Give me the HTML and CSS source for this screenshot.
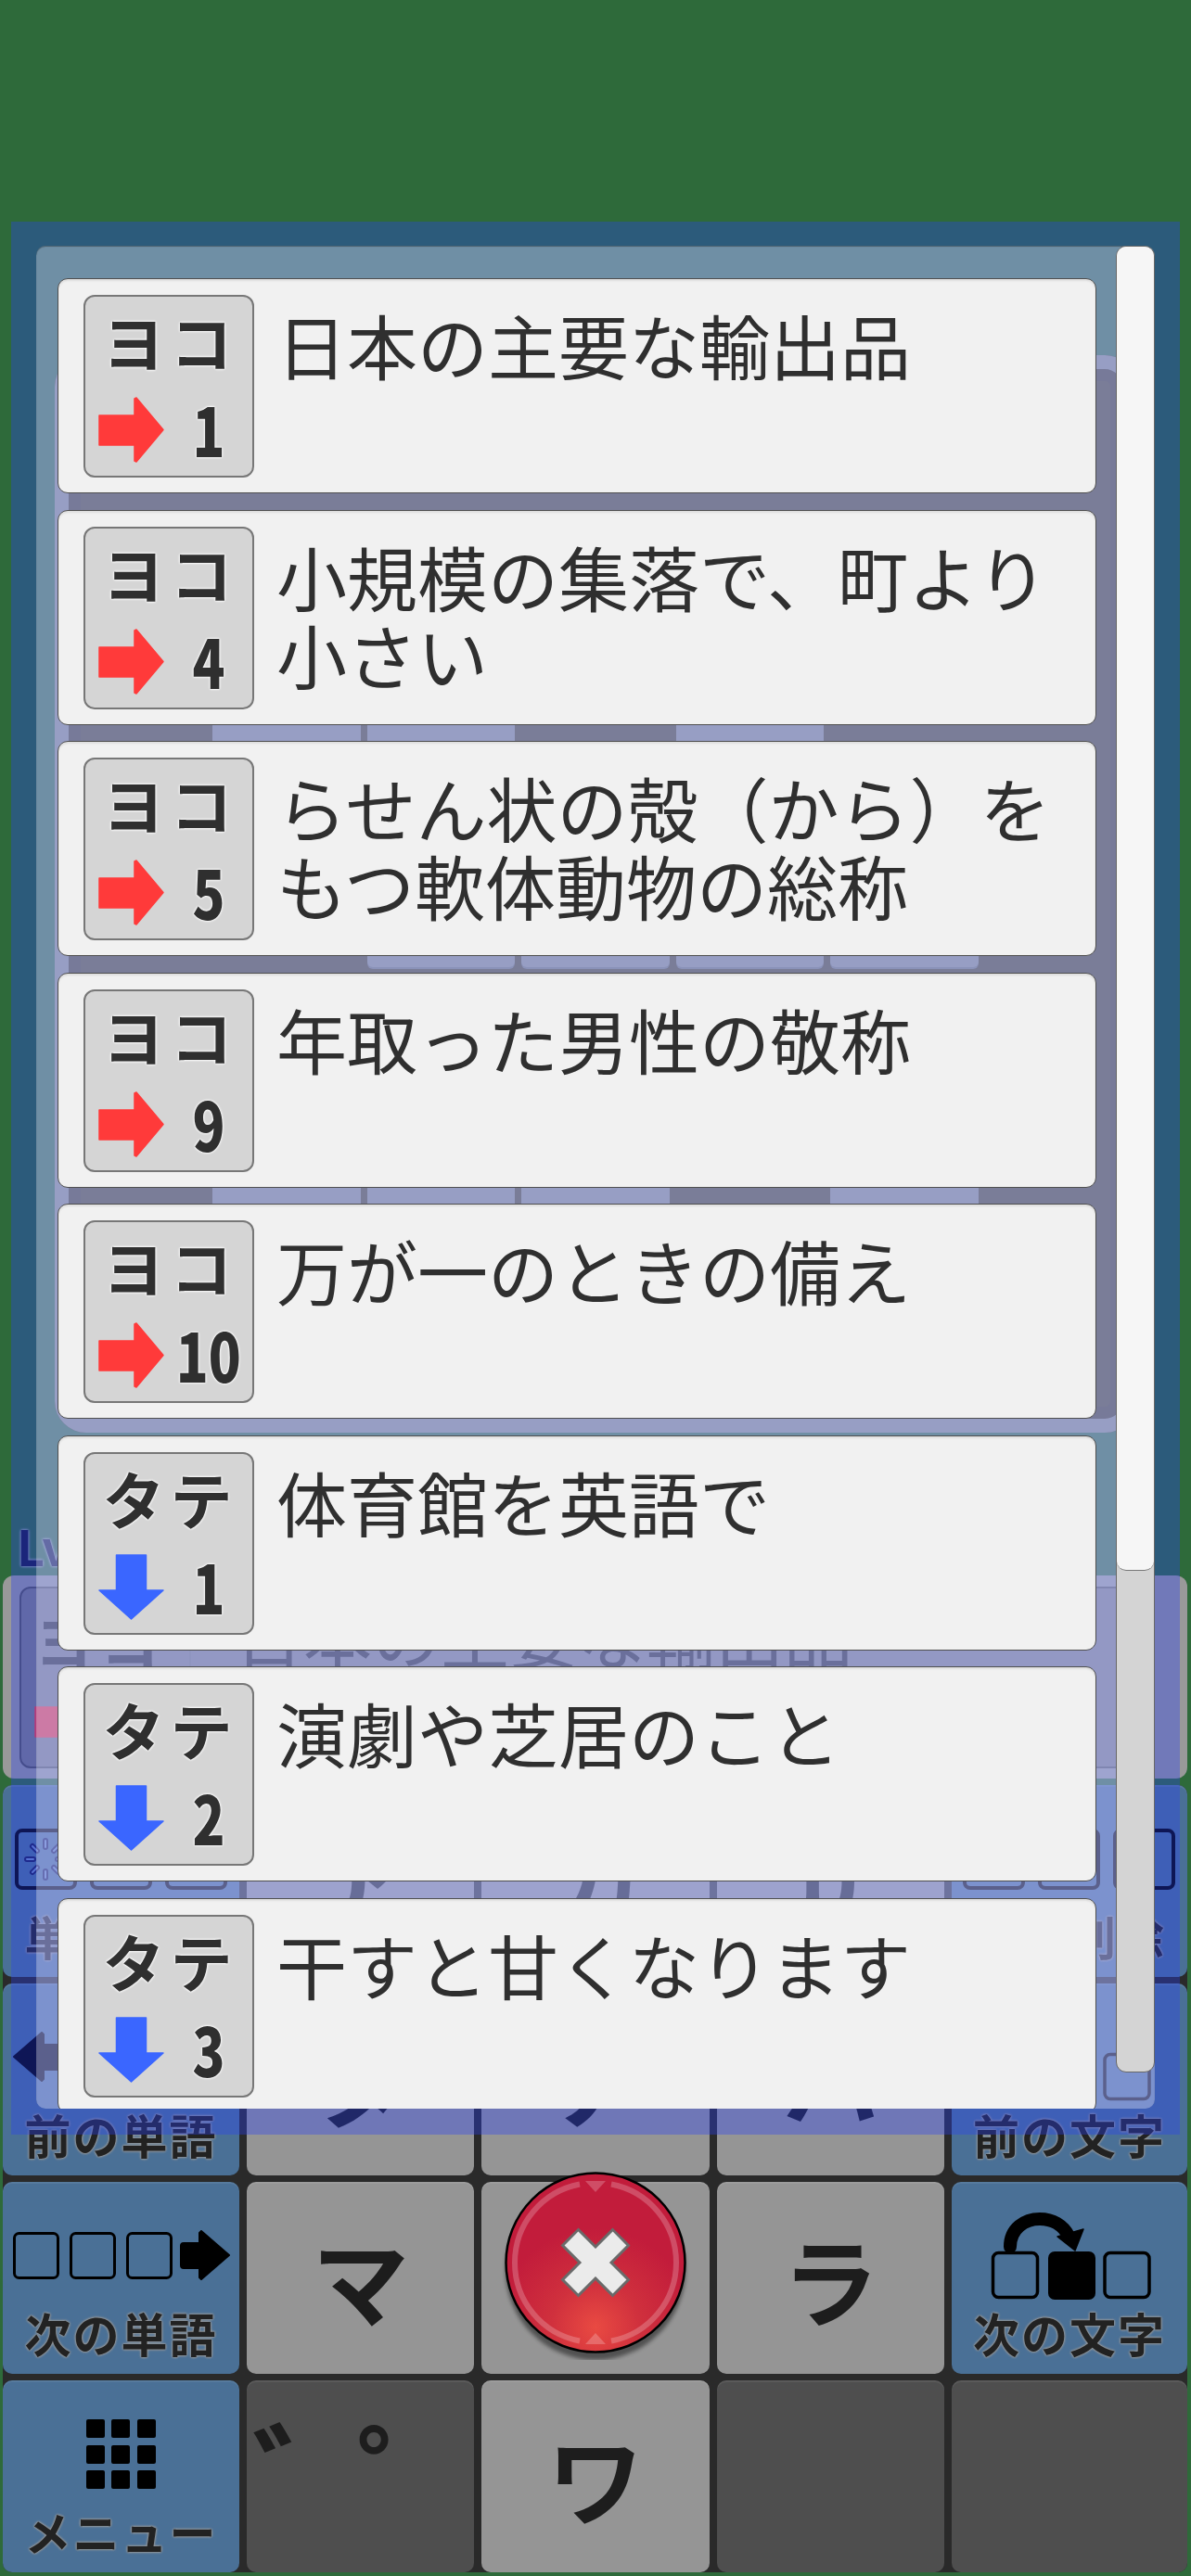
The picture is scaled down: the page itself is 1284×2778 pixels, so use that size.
FILE: index.html
```html
<!DOCTYPE html>
<html lang="ja">
<head>
<meta charset="utf-8">
<title>クロスワード</title>
<link rel="stylesheet" href="styles.css">
</head>
<body>
<svg class="defs" width="0" height="0" aria-hidden="true">
  <defs>
    <symbol id="arrow-right" viewBox="0 0 71 71"><path d="M1 20H39V2L41 1L70 35.5L41 70L39 69V52H1Z" fill="#ff3a3a" stroke="#ff3a3a" stroke-width="1.5" stroke-linejoin="round"/></symbol>
    <symbol id="arrow-down" viewBox="0 0 71 71"><path d="M19.5 1H51.5V39H70L35.5 70L1 39H19.5Z" fill="#3a66ff" stroke="#3a66ff" stroke-width="1.5" stroke-linejoin="round"/></symbol>
    <symbol id="icon-word" viewBox="0 0 234 54">
      <g fill="none" stroke="#000" stroke-width="3"><rect x="1.5" y="3.5" width="47" height="48" rx="5"/><rect x="62.5" y="3.5" width="47" height="48" rx="5"/><rect x="123.5" y="3.5" width="47" height="48" rx="5"/></g>
      <path d="M184 14H201V3L203 1L233 27L203 53L201 51V41H184Q181 41 181 38V17Q181 14 184 14Z" fill="#000" stroke="#000" stroke-linejoin="round" stroke-width="2"/>
    </symbol>
    <symbol id="icon-char" viewBox="0 0 176 95">
      <g fill="none" stroke="#000" stroke-width="3.5"><rect x="5.5" y="44.5" width="48" height="48" rx="6"/><rect x="126" y="44.5" width="48" height="48" rx="6"/></g>
      <rect x="65" y="43" width="51" height="52" rx="7" fill="#000"/>
      <path d="M24 38C24 18 40 8 56 8C70 8 81 15 87 26" fill="none" stroke="#000" stroke-width="14" stroke-linecap="round"/>
      <path d="M75 27L103 19L94 42Z" fill="#000" stroke="#000" stroke-width="1.5" stroke-linejoin="round"/>
    </symbol>
    <symbol id="icon-char-prev" viewBox="0 0 176 95">
      <g fill="none" stroke="#000" stroke-width="3.5"><rect x="5.5" y="44.5" width="48" height="48" rx="6"/><rect x="126" y="44.5" width="48" height="48" rx="6"/></g>
      <rect x="65" y="43" width="51" height="52" rx="7" fill="#000"/>
      <path d="M97 38C97 18 81 8 65 8C51 8 40 15 34 26" fill="none" stroke="#000" stroke-width="14" stroke-linecap="round"/>
      <path d="M46 27L18 19L27 42Z" fill="#000" stroke="#000" stroke-width="1.5" stroke-linejoin="round"/>
    </symbol>
    <symbol id="burst" viewBox="0 0 66 66">
      <g stroke="#1a1f55" stroke-width="6" stroke-linecap="round"><path d="M33 13V20M33 46V53M13 33H20M46 33H53M19 19L24 24M42 42L47 47M47 19L42 24M24 42L19 47"/></g>
      <g stroke="#6f8cc0" stroke-width="2" stroke-linecap="round"><path d="M33 13V20M33 46V53M13 33H20M46 33H53M19 19L24 24M42 42L47 47M47 19L42 24M24 42L19 47"/></g>
    </symbol>
    <radialGradient id="red-fill" cx="0.5" cy="0.86" r="0.55"><stop offset="0" stop-color="#e94a42"/><stop offset="0.45" stop-color="#d0303d"/><stop offset="1" stop-color="#c21c3b"/></radialGradient>
    <filter id="soft"><feGaussianBlur stdDeviation="2"/></filter>
  </defs>
</svg>

<main class="game">
  <section class="board">
    <i></i><i></i><i></i><i></i><i></i><i></i><i></i>
    <i></i><i></i><i></i><i></i><i></i><i></i><i></i>
    <i></i><b></b><b></b><i></i><b></b><i></i><i></i>
    <i></i><i></i><b></b><b></b><b></b><b></b><i></i>
    <i></i><i></i><i></i><i></i><i></i><i></i><i></i>
    <i></i><b></b><b></b><b></b><i></i><b></b><i></i>
    <i></i><i></i><i></i><i></i><i></i><i></i><i></i>
  </section>

  <div class="level">Lv.5</div>

  <section class="clue">
    <div class="clue-box">
      <div class="clue-tag">
        <div class="clue-dir">ヨコ</div>
        <svg class="clue-arrow"><use href="#arrow-right"/></svg>
      </div>
      <div class="clue-text">日本の主要な輸出品</div>
    </div>
  </section>

  <section class="keyboard">
    <button class="ctl"><span class="slot"><span class="ico-del"><span class="cell-box"><svg class="burst-ico"><use href="#burst"/></svg></span><span class="cell-box"><svg class="burst-ico"><use href="#burst"/></svg></span><span class="cell-box"><svg class="burst-ico"><use href="#burst"/></svg></span></span></span><span class="lbl">単語削除</span></button>
    <button class="key">ア</button>
    <button class="key">カ</button>
    <button class="key">サ</button>
    <button class="ctl"><span class="slot"><span class="ico-del"><span class="cell-box"></span><span class="cell-box"><svg class="burst-ico"><use href="#burst"/></svg></span><span class="cell-box"></span></span></span><span class="lbl">文字削除</span></button>

    <button class="ctl"><span class="slot"><svg class="ico-word flip"><use href="#icon-word"/></svg></span><span class="lbl">前の単語</span></button>
    <button class="key">タ</button>
    <button class="key">ナ</button>
    <button class="key">ハ</button>
    <button class="ctl"><span class="slot"><svg class="ico-char"><use href="#icon-char-prev"/></svg></span><span class="lbl">前の文字</span></button>

    <button class="ctl"><span class="slot"><svg class="ico-word"><use href="#icon-word"/></svg></span><span class="lbl">次の単語</span></button>
    <button class="key">マ</button>
    <button class="key">ヤ</button>
    <button class="key">ラ</button>
    <button class="ctl"><span class="slot"><svg class="ico-char"><use href="#icon-char"/></svg></span><span class="lbl">次の文字</span></button>

    <button class="ctl"><span class="slot"><span class="ico-menu"><i></i><i></i><i></i><i></i><i></i><i></i><i></i><i></i><i></i></span></span><span class="lbl">メニュー</span></button>
    <button class="key key-off key-marks"><span>゛</span><span>゜</span></button>
    <button class="key">ワ</button>
    <button class="key key-off"></button>
    <button class="key key-off"></button>

    <svg class="close" viewBox="-105 -105 210 210" aria-label="閉じる">
      <circle cx="0" cy="8" r="97" fill="#000" opacity="0.45" filter="url(#soft)"/>
      <circle r="96.5" fill="url(#red-fill)" stroke="#000" stroke-width="2.5"/>
      <path d="M17 -84.5A86 86 0 0 1 17 84.5M-17 -84.5A86 86 0 0 0 -17 84.5" fill="none" stroke="#fff" stroke-opacity="0.22" stroke-width="6"/>
      <path d="M-11 -88H11L0 -76ZM-11 88H11L0 76Z" fill="#fff" fill-opacity="0.22"/>
      <path d="M-28 -28L28 28M28 -28L-28 28" stroke="#6a6a6a" stroke-width="27"/>
      <path d="M-26 -26L26 26M26 -26L-26 26" stroke="#ebebeb" stroke-width="21"/>
    </svg>
  </section>
</main>

<aside class="dialog">
  <div class="sheet">
    <div class="list">
      <article class="card">
        <div class="tag"><div class="dir">ヨコ</div><div class="tag-foot"><svg class="dir-arrow"><use href="#arrow-right"/></svg><span class="num"><span>1</span></span></div></div>
        <p class="text">日本の主要な輸出品</p>
      </article>
      <article class="card">
        <div class="tag"><div class="dir">ヨコ</div><div class="tag-foot"><svg class="dir-arrow"><use href="#arrow-right"/></svg><span class="num"><span>4</span></span></div></div>
        <p class="text">小規模の集落で、町より小さい</p>
      </article>
      <article class="card">
        <div class="tag"><div class="dir">ヨコ</div><div class="tag-foot"><svg class="dir-arrow"><use href="#arrow-right"/></svg><span class="num"><span>5</span></span></div></div>
        <p class="text">らせん状の殻（から）をもつ軟体動物の総称</p>
      </article>
      <article class="card">
        <div class="tag"><div class="dir">ヨコ</div><div class="tag-foot"><svg class="dir-arrow"><use href="#arrow-right"/></svg><span class="num"><span>9</span></span></div></div>
        <p class="text">年取った男性の敬称</p>
      </article>
      <article class="card">
        <div class="tag"><div class="dir">ヨコ</div><div class="tag-foot"><svg class="dir-arrow"><use href="#arrow-right"/></svg><span class="num"><span>10</span></span></div></div>
        <p class="text">万が一のときの備え</p>
      </article>
      <article class="card">
        <div class="tag"><div class="dir">タテ</div><div class="tag-foot"><svg class="dir-arrow"><use href="#arrow-down"/></svg><span class="num"><span>1</span></span></div></div>
        <p class="text">体育館を英語で</p>
      </article>
      <article class="card">
        <div class="tag"><div class="dir">タテ</div><div class="tag-foot"><svg class="dir-arrow"><use href="#arrow-down"/></svg><span class="num"><span>2</span></span></div></div>
        <p class="text">演劇や芝居のこと</p>
      </article>
      <article class="card">
        <div class="tag"><div class="dir">タテ</div><div class="tag-foot"><svg class="dir-arrow"><use href="#arrow-down"/></svg><span class="num"><span>3</span></span></div></div>
        <p class="text">干すと甘くなります</p>
      </article>
    </div>
    <div class="scrollbar"><div class="thumb"></div></div>
  </div>
</aside>
</body>
</html>
```
FILE: styles.css
```css
* { box-sizing: border-box; }
html, body { margin: 0; padding: 0; }
body {
  position: relative;
  width: 1284px;
  height: 2778px;
  overflow: hidden;
  background: #2e6a3a;
  font-family: "Noto Sans CJK JP", "Noto Sans", sans-serif;
  color: #2f2f2f;
}
.defs { position: absolute; }

/* base game */
.game { display: flex; flex-direction: column; }
.board {
  margin: 383px 0 0 59px;
  width: 1166px;
  height: 1162px;
  padding: 4px;
  border-radius: 34px;
  background: #48411d;
  box-shadow: inset 0 0 0 15px #878d7e, inset 0 0 0 28px #403a1e;
  display: grid;
  grid-template-columns: repeat(7, 1fr);
  grid-template-rows: repeat(7, 1fr);
  gap: 7px;
}
.board b { background: #878d7e; border-radius: 6px; box-shadow: 0 2px 0 #6b7066; }
.level {
  height: 62px;
  margin-top: 92px;
  padding-left: 18px;
  font-size: 52px;
  font-weight: 700;
  line-height: 60px;
  color: #14173a;
  text-shadow: 0 0 3px #aab, 0 0 3px #aab;
}
.clue {
  margin: 0 4px 7px 3px;
  height: 219px;
  padding: 12px 37px 11px 18px;
  border-radius: 12px;
  background: #999;
}
.clue-box {
  height: 100%;
  display: flex;
  border: 2px solid #555;
  border-radius: 12px;
  background: #7f7f80;
}
.clue-tag { width: 183px; border-right: 2px solid #777; padding-left: 14px; }
.clue-dir {
  height: 108px;
  font-size: 64px;
  font-weight: 700;
  line-height: 108px;
  letter-spacing: 7px;
  color: #222;
}
.clue-arrow { display: block; width: 71px; height: 71px; }
.clue-text {
  padding: 0 0 0 47px;
  font-size: 74px;
  line-height: 98px;
  color: #222;
}
.keyboard {
  position: relative;
  margin: 0 4px 0 3px;
  height: 849px;
  display: grid;
  grid-template-columns: 255px 1fr 1fr 1fr 254px;
  grid-template-rows: repeat(4, 207px);
  column-gap: 8px;
  row-gap: 7px;
  background: #2a2a2a;
  border-radius: 10px;
}
.key, .ctl {
  margin: 0;
  padding: 0;
  border: 0;
  border-radius: 10px;
  font-family: inherit;
  box-shadow: inset 0 2px 0 rgba(255, 255, 255, 0.07);
}
.key {
  display: flex;
  align-items: center;
  justify-content: center;
  background: #959595;
  color: #1d1d1d;
  font-size: 104px;
  font-weight: 700;
  line-height: 1;
}
.key-off { background: #4e4e4e; }
.key-marks {
  justify-content: flex-start;
  align-items: flex-start;
  padding: 34px 0 0 6px;
  font-size: 130px;
}
.key-marks span { width: 112px; display: block; }
.ctl {
  display: flex;
  flex-direction: column;
  align-items: center;
  background: #4a7096;
  color: #222;
}
.slot {
  height: 127px;
  width: 100%;
  display: flex;
  align-items: flex-end;
  justify-content: center;
}
.lbl {
  margin-top: 10px;
  font-size: 50px;
  font-weight: 700;
  line-height: 50px;
  letter-spacing: 2px;
  text-shadow: 0 0 3px #9a9a9a, 0 0 3px #9a9a9a, 0 0 2px #9a9a9a;
}
.ico-del { margin-bottom: 14px; display: flex; gap: 14px; }
.cell-box {
  width: 67px;
  height: 66px;
  border: 4px solid #000;
  border-radius: 8px;
  display: block;
}
.burst-ico { display: block; width: 66px; height: 66px; margin: -4px; }
.ico-word { margin-bottom: 21px; width: 234px; height: 54px; }
.ico-char { width: 176px; height: 95px; }
.flip { transform: scaleX(-1); }
.ico-menu {
  margin-bottom: 9px;
  width: 76px;
  height: 76px;
  display: grid;
  grid-template-columns: repeat(3, 20px);
  grid-template-rows: repeat(3, 20px);
  gap: 7.5px;
}
.ico-menu i { background: #000; border-radius: 2px; }
.close { position: absolute; left: 533.5px; top: 410px; width: 210px; height: 210px; }

/* clue list dialog, floats over the game */
.dialog {
  position: absolute;
  left: 12px;
  top: 239px;
  width: 1260px;
  height: 2063px;
  padding: 26px 27px 28px 27px;
  background: rgba(41, 64, 245, 0.35);
}
.sheet {
  height: 2009px;
  display: flex;
  align-items: flex-start;
  border-radius: 10px;
  background: rgba(255, 255, 255, 0.32);
  box-shadow: inset 0 1px 1px rgba(0, 0, 0, 0.35);
}
.list {
  width: 1164px;
  height: 2009px;
  padding: 35px 21.5px 0 23px;
  overflow: hidden;
  display: flex;
  flex-direction: column;
  gap: 17.5px;
}
.card {
  flex: none;
  height: 232px;
  padding: 17px 26px 17px 27px;
  display: flex;
  border: 1.5px solid #4f4f4f;
  border-radius: 11px;
  background: #f1f1f1;
  box-shadow: inset 0 2px 2px rgba(0, 0, 0, 0.08);
}
.tag {
  flex: none;
  width: 184px;
  height: 197px;
  border: 2px solid #777;
  border-radius: 12px;
  background: #d5d5d5;
}
.dir {
  height: 108px;
  font-size: 67px;
  font-weight: 700;
  line-height: 94px;
  letter-spacing: 6px;
  text-align: center;
  text-indent: 3px;
  text-shadow: 0 0 3px #fff, 0 0 3px #fff, 0 0 2px #fff;
}
.tag-foot { height: 71px; display: flex; padding-left: 14px; }
.dir-arrow { flex: none; width: 71px; height: 71px; }
.num {
  flex: 1;
  display: flex;
  justify-content: center;
  font-size: 72px;
  font-weight: 900;
  line-height: 67px;
}
.num span {
  display: block;
  transform: scaleX(0.8);
  text-shadow: 0 0 3px #fff, 0 0 3px #fff, 0 0 2px #fff;
}
.text {
  flex: 1;
  margin: 0 0 0 24px;
  padding-top: 11px;
  font-size: 76px;
  font-weight: 400;
  line-height: 84px;
}
.scrollbar {
  flex: none;
  width: 42px;
  height: 1970px;
  border: 1.5px solid #666;
  border-radius: 11px;
  background: #d4d4d4;
  overflow: hidden;
}
.thumb {
  height: 1428px;
  background: #f6f6f6;
  border-bottom: 1.5px solid #777;
  border-radius: 0 0 10px 10px;
}
```
